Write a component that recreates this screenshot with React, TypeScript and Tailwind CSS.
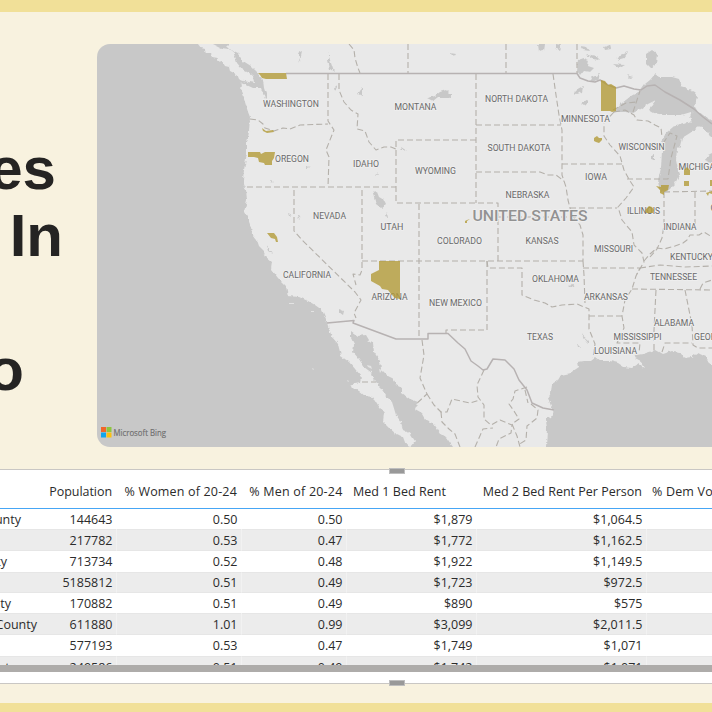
import React from "react";

const LAND =
  "M198 44 L201 48 205 49 206 53 210 53 212 57 218 58 216 62 222 61 225 66 229 67 230 71 236 74 238 79 242 84 241 91 245 102 248 112 250 117 249 132 247 142 247 153 244 170 243 181 246 190 247 200 244 212 248 219 251 227 252 234 257 240 259 246 263 250 266 257 272 262 271 269 278 278 286 286 288 296 299 297 308 301 315 305 322 310 326 319 328 326 332 337 338 344 341 356 349 362 356 370 362 377 361 382 355 383 350 386 359 391 365 396 373 397 378 405 384 413 383 422 389 428 395 433 403 437 406 445 410 447 415 441 411 435 407 432 403 430 401 422 396 415 392 402 386 396 381 388 375 382 372 373 364 367 359 359 353 352 354 344 351 338 351 331 358 336 365 335 368 340 373 343 374 352 380 361 381 369 388 376 394 379 396 385 402 388 402 393 410 399 418 402 415 409 422 413 426 420 434 424 440 433 446 437 453 447 L546 447 547 430 546 419 551 417 554 411 551 406 548 398 551 393 552 384 558 380 561 375 570 373 579 367 578 362 584 361 590 361 595 357 600 361 610 361 618 363 624 367 632 368 638 364 645 368 641 361 635 358 636 355 643 354 656 350 663 354 672 351 680 352 684 358 692 357 698 353 706 357 710 364 L712 366 712 44Z";

const WATERS = [
  "M211 43 L230 43 227 46 232 51 238 54 243 61 251 66 256 71 258 74 263 80 264 88 267 97 265 99 261 88 253 88 240 82 232 78 244 81 254 83 253 76 248 72 242 69 237 63 234 53 229 49 221 48Z",
  "M614 112 L622 103 631 96 640 91 645 84 650 80 655 74 659 77 672 77 679 79 681 87 688 89 694 92 697 96 695 107 698 112 691 112 681 115 671 115 664 115 654 113 649 110 652 105 656 100 648 104 641 109 633 113 625 112Z",
  "M660 192 L658 180 661 168 662 151 661 142 666 133 673 127 683 124 693 122 699 126 695 129 690 133 682 138 680 146 677 149 676 160 679 175 675 184 671 188 665 193Z",
  "M690 115 L696 110 702 115 712 121 712 140 708 133 702 127 692 125Z",
  "M712 153 L708 155 705 161 712 164Z",
  "M373 193 L377 192 379 197 384 200 386 204 381 208 376 204Z",
  "M646 54 L652 50 657 54 656 64 651 68 646 63Z",
  "M538 44 L545 44 544 51 539 52Z M556 44 L561 45 559 50 555 48Z",
  "M578 60 L584 58 589 60 588 66 594 68 590 72 584 71 580 76 577 72Z",
  "M580 46 L587 47 590 51 583 50Z M586 54 L596 56 600 60 592 59Z M590 78 L600 74 598 80 591 82Z",
  "M427 98 L435 96 440 92 446 90 451 95 451 98 444 97 438 97 433 101Z",
  "M574 92 L583 87 582 92 576 94Z M581 104 L588 99 588 104 584 106Z",
  "M339 309 L344 311 343 315 339 312Z M651 155 L654 154 654 160 651 159Z",
  "M577 343 L581 347 578 347Z M581 334 L588 340 588 343Z M568 285 L575 284 572 288Z",
  "M328 52 L330 60 334 72 330 69 328 60Z M298 53 L302 51 300 60 298 63 300 58Z",
  "M358 94 L362 88 362 96Z M333 88 L338 85 335 91Z M401 147 L407 151 402 150Z",
  "M450 53 L456 54 454 57Z M626 75 L633 77 629 78Z",
  "M288 213 L292 215 289 216Z M297 214 L300 219 297 217Z M387 212 L388 217 385 216Z",
  "M270 180 L274 183 270 182Z M306 166 L310 167 306 168Z M375 174 L379 172 376 175Z",
  "M266 244 L270 250 273 254 268 251Z M604 47 L610 45 611 49 605 50Z M620 55 L628 52 624 58 617 60Z M613 64 L624 65 619 68Z",
];

const STATE_LINES = [
  "M328 74V121L334 130 326 150 329 157 328 187",
  "M339 74V90L344 102 351 110 358 114 357 129 365 131 369 142 376 150 384 147 391 147 396 149",
  "M250 119L258 120 263 124 265 128 274 131 283 128 290 129 300 125 328 124",
  "M247 187H396", "M476 140H396V203H498V261", "M476 74V203",
  "M294 190V231L302 240 355 292 361 300 354 313 356 318",
  "M362 190V270L360 275 353 274 356 285", "M419 204V339", "M362 261H583",
  "M487 261V330H446V333", "M487 261L488 268H522V295L534 300 545 303 552 307 562 305 577 304 589 309V329L595 344 593 358",
  "M583 261L584 275 585 303", "M583 268H640L636 276 632 289 625 300 622 316 624 328 617 343H640L639 353",
  "M589 316H622", "M640 268L660 265 685 267 712 266", "M632 289L712 290", "M700 289L703 283 712 280",
  "M656 290L654 330 654 352", "M685 290L692 325 693 345 698 348H712", "M662 352L665 343H692",
  "M476 125H561", "M476 172H540L548 175 556 175 564 181", "M553 74L556 95 559 115 562 130V175L566 187 568 200 570 208",
  "M562 164H622", "M570 208H617", "M498 217H577", "M570 208L573 217 580 225 583 235V261",
  "M614 112L604 123 604 136 610 145 620 156 624 170 630 181 634 187 626 198 618 207 622 220 632 232 634 245 642 253 644 262 637 274",
  "M627 179H668L671 158 677 136 670 133 664 142",
  "M614 112L625 110 634 115 637 120 648 121 655 125 661 128 662 137", "M633 112L640 91", "M613 110L626 103 637 102",
  "M664 192L664 225 662 238 657 249 650 257", "M695 192V224", "M664 192L712 191",
  "M644 261L650 254 657 248 664 249 675 246 683 243 687 240 690 235 699 235 704 232 712 237",
  "M408 44V73", "M506 44V73", "M577 44V73", "M349 44L354 50 355 58 358 68 360 73",
  "M362 382H376",
  "M422 340L424 355 420 378 427 394 415 405", "M427 394L434 405 441 412 447 412 452 399 470 403 480 400",
  "M441 412L442 422 449 429 455 434 460 447",
  "M484 370L477 385 478 397 484 405 484 419 491 425 500 420 512 425 511 433 499 439 496 447",
  "M475 447L483 429 493 428", "M527 387L515 391 513 399 509 404 514 411 519 419 512 424 517 436 520 447",
  "M531 404L538 410 537 418 527 426 526 440 518 445", "M525 390L528 403",
];

const COUNTRY_LINES = [
  "M286 73.5H577L580 78 588 81 595 82 600 80 608 85 616 88 624 86 634 89 641 90 647 86 655 85 665 92 680 100 694 109 703 117 712 124",
  "M327 323L354 320.5 353 323 396 339H428V333.5L448 333.5 458 343 465 349 471 361 478 366 483 370 487 369 493 359 505 360 514 369 519 380 527 390 532 403 543 408 554 410",
];

const COUNTIES = [
  "M258 73H286L287 79H266L262 78 260 75Z",
  "M262 128L266 131 273 130 274 132 267 133 263 131Z",
  "M248 152H260L261 154 265 152H275L274 158 272 161 272 165H265L264 163 259 162 258 158 254 157H248Z",
  "M267 233H274L277 237 278 242 276 242 275 239 271 238Z",
  "M379 261H400V299L395 298 391 294 388 290 382 289 380 286 371 281V274L379 270Z",
  "M601 80L605 81 608 85 611 84 616 87V111L612 112 610 111H601Z",
  "M594 138L597 136 599 138 602 138 602 140 599 143 596 142 594 141Z",
  "M656 186L661 187V185H669L668 190 664 192V195L660 193 660 190Z",
  "M646 209L649 206 652 207 654 210 653 213H646L645 211Z",
  "M684 170L687 167 690 170V175H684Z", "M684 181H689V186H684Z", "M710 180H712V186H710Z",
  "M706 193L712 191V194L709 193 708 196Z", "M465 221L467 220 470 219 467 221 467 223 465 223Z",
];

// Label text, horizontal centre, baseline, width
const LABELS: [string, number, number, number][] = [
  ["WASHINGTON", 291, 107.3, 56], ["MONTANA", 415.5, 109.7, 42], ["NORTH DAKOTA", 516.5, 101.8, 63],
  ["MINNESOTA", 585.5, 121.8, 49], ["WISCONSIN", 641.5, 149.8, 46], ["MICHIGAN", 700, 170, 43],
  ["OREGON", 292, 161.8, 34], ["IDAHO", 366, 167.3, 26], ["WYOMING", 435.5, 173.8, 41],
  ["SOUTH DAKOTA", 519, 151.3, 63], ["IOWA", 596, 179.5, 22], ["NEBRASKA", 527.5, 198, 44],
  ["NEVADA", 329.5, 219.3, 33], ["UTAH", 392, 230, 23], ["COLORADO", 459.5, 243.5, 45],
  ["KANSAS", 542, 243.5, 33], ["ILLINOIS", 643.5, 213.8, 33], ["INDIANA", 680, 229.8, 33],
  ["OHIO", 721, 211, 21], ["MISSOURI", 613.5, 251.5, 39], ["KENTUCKY", 691.5, 259.5, 43],
  ["CALIFORNIA", 307, 278, 48], ["ARIZONA", 389.5, 299.5, 36], ["NEW MEXICO", 455.5, 306, 53],
  ["OKLAHOMA", 555.5, 282, 47], ["TENNESSEE", 673.5, 279.5, 47], ["ARKANSAS", 606, 299.5, 44],
  ["TEXAS", 540, 339.8, 26], ["ALABAMA", 674, 326, 40], ["MISSISSIPPI", 637.5, 339.8, 48],
  ["GEORGIA", 712, 339.8, 36], ["LOUISIANA", 615.5, 354, 43],
];

function BingMap() {
  return (
    <svg className="block h-full w-full" viewBox="97 44 615 403" preserveAspectRatio="none">
      <defs>
        <filter id="coast" x="-5%" y="-5%" width="110%" height="110%" colorInterpolationFilters="sRGB">
          <feTurbulence type="fractalNoise" baseFrequency="0.22" numOctaves="2" seed="4" result="n" />
          <feDisplacementMap in="SourceGraphic" in2="n" scale="4" xChannelSelector="R" yChannelSelector="G" />
        </filter>
      </defs>
      <rect x="97" y="44" width="615" height="403" fill="#c8c8c8" />
      <g filter="url(#coast)">
        <path d={LAND} fill="#e9e9e9" />
        <path d="M714 366V44M712 43H200M546 448H455" stroke="#e9e9e9" strokeWidth="6" />
      </g>
      <g filter="url(#coast)">
        {WATERS.map((d) => <path key={d} d={d} fill="#c8c8c8" />)}
      </g>
      <g fill="#e3e3e3">
        <path d="M289 303h5v1h-5zM311 311h3v1h-3zM312 368l2 1-1 1zM347 380l2 1-1 1zM367 365l4 1 1 3-4-2zM379 369l3 1-2 3z" />
      </g>
      <g fill="none" stroke="#b4b0aa" strokeWidth="1.1" strokeDasharray="6 3" strokeLinejoin="round">
        {STATE_LINES.map((d) => <path key={d} d={d} />)}
      </g>
      <g fill="none" stroke="#b7b2b2" strokeWidth="1.5" strokeLinejoin="round">
        {COUNTRY_LINES.map((d) => <path key={d} d={d} />)}
      </g>
      <g fill="#6a6a6a" stroke="#eeeeee" strokeWidth="2" strokeLinejoin="round" paintOrder="stroke" textAnchor="middle" fontFamily="Roboto, sans-serif" fontSize="8.8">
        {LABELS.map(([t, x, y, w]) => (
          <text key={t} x={x} y={y} textLength={w} lengthAdjust="spacingAndGlyphs">{t}</text>
        ))}
        <text x="530" y="220.8" fontSize="14.6" fontWeight="500" fill="#929292" textLength="115" lengthAdjust="spacingAndGlyphs">UNITED STATES</text>
      </g>
      <g fill="#b39b38" fillOpacity="0.8">
        {COUNTIES.map((d) => <path key={d} d={d} />)}
      </g>
      <rect x="101" y="427" width="5" height="5" fill="#f1662a" />
      <rect x="106.5" y="427" width="5" height="5" fill="#8dc63f" />
      <rect x="101" y="432.5" width="5" height="5" fill="#12a5ee" />
      <rect x="106.5" y="432.5" width="5" height="5" fill="#fcc010" />
      <text x="113.5" y="435.6" fontFamily="Open Sans, sans-serif" fontSize="8.4" fill="#6f6f6f" stroke="#6f6f6f" strokeWidth="0.15" textLength="52.5" lengthAdjust="spacingAndGlyphs">Microsoft Bing</text>
    </svg>
  );
}

const GRID = "grid grid-cols-[42px_75px_125px_105px_130px_170px_65px]";

const ROWS = [
  { h: "h-[20px]", pad: "pr-[21px]", c: ["unty", "144643", "0.50", "0.50", "$1,879", "$1,064.5"] },
  { h: "h-[22px]", pad: "pr-[21px]", c: ["", "217782", "0.53", "0.47", "$1,772", "$1,162.5"] },
  { h: "h-[21px]", pad: "pr-[35px]", c: ["ty", "713734", "0.52", "0.48", "$1,922", "$1,149.5"] },
  { h: "h-[21px]", pad: "pr-[21px]", c: ["", "5185812", "0.51", "0.49", "$1,723", "$972.5"] },
  { h: "h-[20px]", pad: "pr-[31px]", c: ["ty", "170882", "0.51", "0.49", "$890", "$575"] },
  { h: "h-[22px]", pad: "pr-[5px]", c: ["County", "611880", "1.01", "0.99", "$3,099", "$2,011.5"] },
  { h: "h-[21px]", pad: "pr-[21px]", c: ["", "577193", "0.53", "0.47", "$1,749", "$1,071"] },
  { h: "h-[23px]", pad: "pr-[26px]", c: ["County", "249586", "0.51", "0.49", "$1,742", "$1,071"] },
];

const HEADS: [string, string][] = [
  ["Population", "justify-end pr-[5px] tracking-[-0.06px]"],
  ["% Women of 20-24", "justify-end pr-[5px] tracking-[0.17px]"],
  ["% Men of 20-24", "justify-end pr-[4.5px] tracking-[0.2px]"],
  ["Med 1 Bed Rent", "justify-start pl-[6px] tracking-[0.05px]"],
  ["Med 2 Bed Rent Per Person", "justify-end pr-[5px]"],
  ["% Dem Voters", "justify-start pl-[5px] tracking-[0.17px]"],
];

function Handle({ place }: { place: string }) {
  return (
    <div className={`absolute left-[389px] h-[6px] w-4 border border-[#bebebe] bg-[#999999] ${place}`} />
  );
}

function DataTable() {
  return (
    <section className="relative h-[215px] border-y border-[#c9c7c4] bg-white font-['Open_Sans','Noto_Sans',sans-serif] text-[12.5px] text-[#2b2b2b]">
      <Handle place="-top-[2px]" />
      <Handle place="-bottom-[3px]" />
      <div className={`${GRID} h-[39px] border-b border-[#46a6f5] pt-[6px]`}>
        <div />
        {HEADS.map(([t, cls]) => (
          <div key={t} className={`flex items-center whitespace-nowrap ${cls}`}>{t}</div>
        ))}
      </div>
      <div className="h-[156px] overflow-hidden">
        {ROWS.map((r, i) => (
          <div key={i} className={`${GRID} ${r.h} ${i % 2 ? "bg-[#ececec] shadow-[inset_0_1px_0_#e6e6e6,inset_0_-1px_0_#e6e6e6]" : "bg-white"}`}>
            {r.c.map((v, j) => (
              <div key={j} className={`flex items-center justify-end whitespace-nowrap pt-[2px] ${j === 0 ? r.pad : "border-r border-white/30 pr-[3.5px]"}`}>{v}</div>
            ))}
          </div>
        ))}
      </div>
      <div className="h-[7px] bg-[#aeacaa]" />
    </section>
  );
}

export default function App() {
  return (
    <main className="flex h-[712px] w-[712px] flex-col overflow-hidden border-t-[12px] border-b-[9px] border-[#f1e098] bg-[#f8f2df]">
      <div className="mt-8 flex h-[403px] shrink-0">
        <h1 className="flex w-[97px] shrink-0 flex-col overflow-hidden pt-[91px] font-['Liberation_Sans',Arial,sans-serif] text-[60px] leading-[67px] font-bold text-[#252423]">
          <span className="flex h-[67px] justify-end pr-[41px]">es</span>
          <span className="flex h-[67px] justify-end pr-[34px]">In</span>
          <span className="h-[67px]" />
          <span className="flex h-[67px] justify-end pr-[73px]">o</span>
        </h1>
        <div className="w-[615px] shrink-0 overflow-hidden rounded-l-[13px]">
          <BingMap />
        </div>
      </div>
      <div className="mt-[22px]">
        <DataTable />
      </div>
    </main>
  );
}
